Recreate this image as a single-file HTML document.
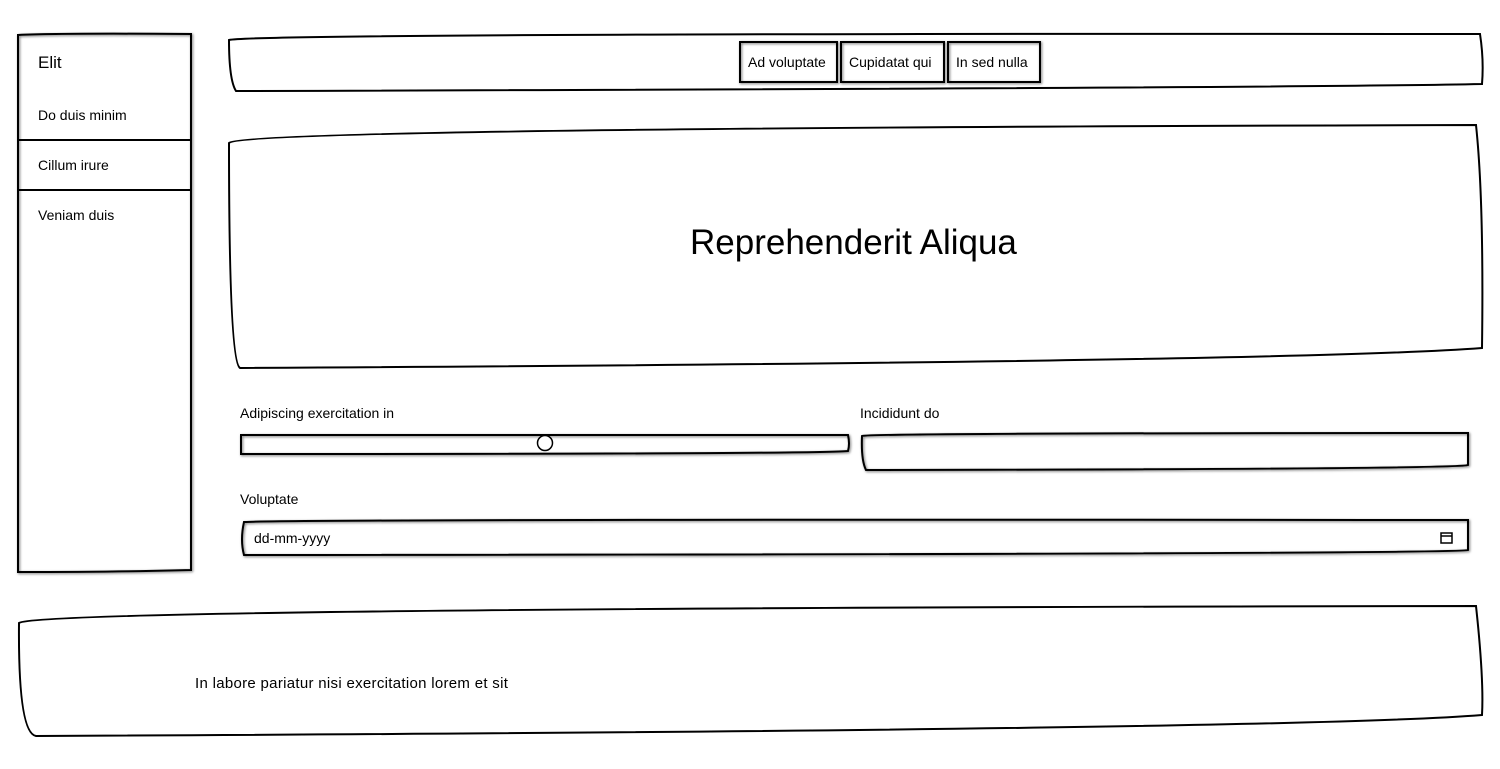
<!DOCTYPE html>
<html><head><meta charset="utf-8"><style>
html,body{margin:0;padding:0;background:#fff;width:1500px;height:769px;overflow:hidden}
body{font-family:"Liberation Sans",sans-serif;color:#000;position:relative}
.t{position:absolute;white-space:nowrap;font-size:14px;line-height:1}
svg{position:absolute;left:0;top:0}
</style></head><body>
<svg width="1500" height="769" viewBox="0 0 1500 769" fill="none" stroke="#000" stroke-width="2">
<defs><filter id="s" x="-5%" y="-5%" width="110%" height="110%"><feDropShadow dx="1" dy="1" stdDeviation="1.2" flood-color="#000" flood-opacity="0.55"/></filter></defs>
<g filter="url(#s)">
<path d="M18 35 Q60 33 191 34 L191 570 Q120 572 18 572 Z"/>
<path d="M740 42 L837 42 L837 82 L740 82 Z"/>
<path d="M841 42 L944 42 L944 82 L841 82 Z"/>
<path d="M948 42 L1040 42 L1040 82 L948 82 Z"/>
<path d="M241 435 L848 435 Q850 444 848 451 Q820 454 241 454 Z"/>
<path d="M862 436 Q870 433 1468 433 L1468 465 Q1460 469 866 470 Q861 460 862 436 Z"/>
<path d="M244 522 Q300 519 1468 520 L1468 550 Q1460 554 244 555 Q240 540 244 522 Z"/>
</g>
<path d="M18 140 L191 140 M18 190 L191 190"/>
<path d="M229 40 Q260 33 1480 34 Q1484 60 1482 84 Q1300 88 236 91 Q229 80 229 40 Z"/>
<path d="M229 143 Q240 128 1476 125 Q1484 200 1482 348 Q1300 362 240 368 Q229 362 229 143 Z"/>
<path d="M19 623 Q40 608 1476 606 Q1484 680 1482 715 Q1300 730 36 736 Q18 733 19 623 Z"/>
<circle cx="545" cy="443" r="7.5" fill="#fff" stroke-width="1.5"/>
<g stroke-width="1.5"><rect x="1441" y="533" width="11" height="10"/><path d="M1441 536 L1452 536"/></g>
</svg>
<div class="t" style="left:38px;top:54px;font-size:17px">Elit</div>
<div class="t" style="left:38px;top:108px">Do duis minim</div>
<div class="t" style="left:38px;top:158px">Cillum irure</div>
<div class="t" style="left:38px;top:208px">Veniam duis</div>
<div class="t" style="left:748px;top:55px">Ad voluptate</div>
<div class="t" style="left:849px;top:55px">Cupidatat qui</div>
<div class="t" style="left:956px;top:55px">In sed nulla</div>
<div class="t" style="left:690px;top:225px;font-size:35px">Reprehenderit Aliqua</div>
<div class="t" style="left:240px;top:406px">Adipiscing exercitation in</div>
<div class="t" style="left:860px;top:406px">Incididunt do</div>
<div class="t" style="left:240px;top:492px">Voluptate</div>
<div class="t" style="left:254px;top:531px">dd-mm-yyyy</div>
<div class="t" style="left:195px;top:676px;font-size:15px;letter-spacing:0.3px">In labore pariatur nisi exercitation lorem et sit</div>
</body></html>
